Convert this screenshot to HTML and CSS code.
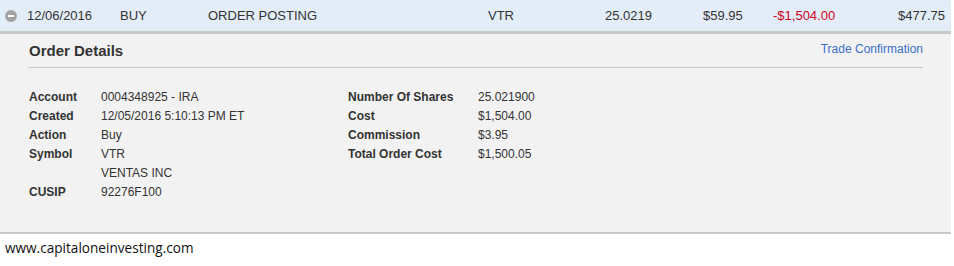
FILE: index.html
```html
<!DOCTYPE html>
<html lang="en">
<head>
  <meta charset="UTF-8">
  <title>Order Details</title>
  <link rel="stylesheet" href="styles.css">
</head>
<body>
  <div class="wrap">
    <div class="row">
      <span class="toggle"></span>
      <span>12/06/2016</span>
      <span>BUY</span>
      <span>ORDER POSTING</span>
      <span>VTR</span>
      <span>25.0219</span>
      <span>$59.95</span>
      <span class="neg">-$1,504.00</span>
      <span class="right">$477.75</span>
    </div>

    <div class="panel">
      <div class="panel-head">
        <h2>Order Details</h2>
        <a href="#">Trade Confirmation</a>
      </div>

      <div class="details">
        <dl class="col col-left">
          <dt>Account</dt><dd>0004348925 - IRA</dd>
          <dt>Created</dt><dd>12/05/2016 5:10:13 PM ET</dd>
          <dt>Action</dt><dd>Buy</dd>
          <dt>Symbol</dt><dd>VTR</dd>
          <dt></dt><dd>VENTAS INC</dd>
          <dt>CUSIP</dt><dd>92276F100</dd>
        </dl>
        <dl class="col col-right">
          <dt>Number Of Shares</dt><dd>25.021900</dd>
          <dt>Cost</dt><dd>$1,504.00</dd>
          <dt>Commission</dt><dd>$3.95</dd>
          <dt>Total Order Cost</dt><dd>$1,500.05</dd>
        </dl>
      </div>
    </div>
  </div>

  <div class="footer">www.capitaloneinvesting.com</div>
</body>
</html>
```

FILE: styles.css
```css
body { margin: 0; background: #fff; font-family: "Liberation Sans", Arial, sans-serif; color: #333; }
.wrap { width: 951px; }

.row {
  display: grid;
  grid-template-columns: 27px 93px 88px 280px 117px 98px 70px 100px 1fr;
  align-items: center;
  height: 31px;
  background: #e3edf8;
  font-size: 13px;
  color: #333;
  border-bottom: 3px solid #c9c9c9;
}
.toggle {
  position: relative;
  width: 12px;
  height: 12px;
  margin-left: 5px;
  border-radius: 50%;
  background: #a3a3a3;
}
.toggle::after {
  content: "";
  position: absolute;
  left: 3px;
  top: 5px;
  width: 6px;
  height: 2px;
  background: #fff;
}
.neg { color: #d0021b; }
.right { text-align: right; padding-right: 6px; }

.panel {
  background: #f2f2f2;
  padding: 0 28px 0 28px;
  height: 198px;
  border-bottom: 2px solid #c9c9c9;
}
.panel-head {
  display: flex;
  justify-content: space-between;
  align-items: center;
  height: 33px;
  border-bottom: 1px solid #c8c8c8;
}
.panel-head h2 {
  margin: 0;
  padding-left: 1px;
  font-size: 15px;
  color: #333;
}
.panel-head a {
  font-size: 12px;
  color: #3b6fc6;
  text-decoration: none;
  margin-top: -3px;
}

.details {
  display: flex;
  align-items: flex-start;
  padding-top: 20px;
}
.col {
  display: grid;
  margin: 0;
  font-size: 12px;
  line-height: 19px;
}
.col-left { grid-template-columns: 72px 247px; padding-left: 1px; }
.col-right { grid-template-columns: 130px auto; }
.col dt { font-weight: bold; color: #333; }
.col dd { margin: 0; color: #333; }

.footer {
  padding: 4px 5px;
  font-family: "Open Sans", sans-serif;
  font-size: 13.6px;
  color: #111;
}
```
